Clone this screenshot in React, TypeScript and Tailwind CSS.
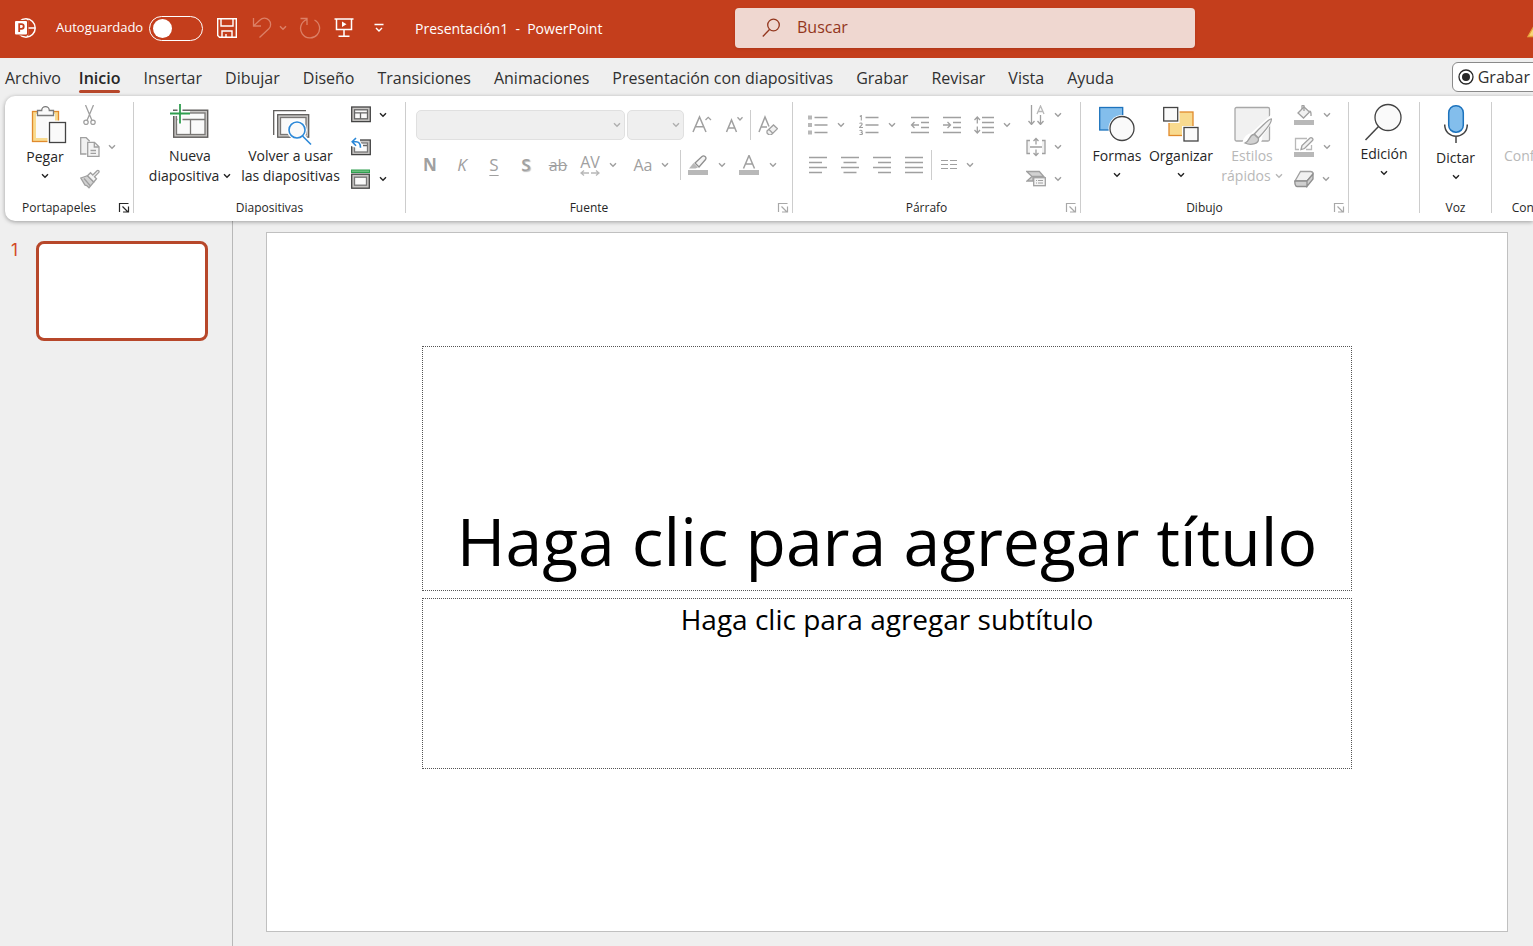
import React from 'react';

interface IconProps {
  width?: number;
  height?: number;
  className?: string;
  children: React.ReactNode;
}

function Icon({ width = 20, height = 20, className = '', children }: IconProps) {
  return (
    <svg
      width={width}
      height={height}
      viewBox={`0 0 ${width} ${height}`}
      fill="none"
      stroke="currentColor"
      strokeWidth="1.3"
      aria-hidden="true"
      className={`shrink-0 ${className}`}
    >
      {children}
    </svg>
  );
}

function Chevron({ className = '' }: { className?: string }) {
  return (
    <Icon width={8} height={6} className={className}>
      <path d="M1 1.2 4 4.3 7 1.2" strokeWidth="1.4" />
    </Icon>
  );
}

function MenuButton({ label, disabled = true, children }: { label: string; disabled?: boolean; children?: React.ReactNode }) {
  return (
    <button
      type="button"
      aria-label={label}
      disabled={disabled}
      className={`flex h-8 items-center gap-2 ${disabled ? 'text-[#a0a0a0]' : 'text-[#262626]'}`}
    >
      {children}
      <Chevron />
    </button>
  );
}

function ToolButton({ label, className = 'w-8', children }: { label: string; className?: string; children: React.ReactNode }) {
  return (
    <button type="button" aria-label={label} disabled className={`flex h-[30px] shrink-0 items-center justify-center text-[#a0a0a0] ${className}`}>
      {children}
    </button>
  );
}

function DropArrow({ label, className = 'w-[14px]' }: { label: string; className?: string }) {
  return (
    <ToolButton label={label} className={className}>
      <Chevron />
    </ToolButton>
  );
}

interface LargeButtonProps {
  icon: React.ReactNode;
  lines: string[];
  arrow?: 'inline' | 'below' | 'none';
  disabled?: boolean;
  className?: string;
  iconClassName?: string;
}

function LargeButton({ icon, lines, arrow = 'below', disabled = false, className = '', iconClassName = 'h-[47px]' }: LargeButtonProps) {
  return (
    <button
      type="button"
      disabled={disabled}
      className={`flex shrink-0 flex-col items-center text-[14px] leading-5 ${disabled ? 'text-[#b8b8b8]' : 'text-[#262626]'} ${className}`}
    >
      <span className={`shrink-0 ${iconClassName}`}>{icon}</span>
      {lines.map((line, i) => (
        <span key={line} className="flex items-center gap-1 whitespace-nowrap">
          {line}
          {arrow === 'inline' && i === lines.length - 1 && <Chevron />}
        </span>
      ))}
      {arrow === 'below' && <Chevron className="mt-[6px]" />}
    </button>
  );
}

interface GroupProps {
  label: string;
  launcher?: 'active' | 'disabled';
  className: string;
  children: React.ReactNode;
}

function Group({ label, launcher, className, children }: GroupProps) {
  return (
    <section aria-label={label || 'Edición'} className={`flex shrink-0 ${className}`}>
      <div className="flex min-w-0 flex-1 flex-col">
        <div className="flex h-24 items-start">{children}</div>
        <div className="flex h-[18px] items-end text-[12px] leading-[10px] text-[#262626]">
          <span className="flex-1 text-center">{label}</span>
          {launcher && (
            <button
              type="button"
              aria-label={`Opciones de ${label}`}
              className={`w-5 pl-[5px] ${launcher === 'active' ? 'text-[#262626]' : 'text-[#a8a8a8]'}`}
            >
              <Icon width={12} height={11}>
                <path d="M1.5 10V1.5H10.5M4.5 4.5 10 10M10.5 4.5V10H5" strokeWidth="1.2" />
              </Icon>
            </button>
          )}
        </div>
      </div>
      <div className="mt-[3px] w-px bg-[#cdcdcd]" />
    </section>
  );
}

const TABS = [
  'Archivo',
  'Inicio',
  'Insertar',
  'Dibujar',
  'Diseño',
  'Transiciones',
  'Animaciones',
  'Presentación con diapositivas',
  'Grabar',
  'Revisar',
  'Vista',
  'Ayuda',
];

function TitleBar() {
  return (
    <header className="flex h-[58px] items-center overflow-hidden bg-[#c43e1c] pb-[2px] text-white">
      <Icon width={22} height={22} className="ml-[14px]">
        <circle cx="12" cy="11" r="9.2" strokeWidth="1.5" />
        <path d="M13.5 2v18M13 11h8" strokeWidth="1.5" />
        <rect x="0" y="3" width="14.5" height="15.5" rx="1.5" fill="#c43e1c" stroke="none" />
        <rect x="1" y="4" width="12" height="13.5" rx="1" fill="white" stroke="none" />
        <path d="M5.2 15V7.2h2.2a2.3 2.3 0 0 1 0 4.7H5.2" stroke="#c43e1c" strokeWidth="1.8" />
      </Icon>
      <label htmlFor="autosave" className="ml-5 w-[93px] shrink-0 text-[13px]">Autoguardado</label>
      <input
        id="autosave"
        type="checkbox"
        role="switch"
        className="h-[25px] w-[54px] shrink-0 appearance-none rounded-full border border-white before:mt-[2px] before:ml-[3px] before:block before:size-[19px] before:rounded-full before:bg-white"
      />
      <button type="button" aria-label="Guardar" className="ml-[13px]">
        <Icon width={22} height={22}>
          <path d="M1.7 1.7h18.6v18.6H3.5L1.7 18.5zM5 2v7h12V2M6 20v-6h10v6M10 20v-3" strokeWidth="1.4" />
        </Icon>
      </button>
      <button type="button" aria-label="Deshacer" disabled className="ml-[14px] flex items-center gap-[7px] text-[#dc8067]">
        <Icon width={20} height={22}>
          <path d="M1.5 1v8H9M1.8 8.7 8 3a6.2 6.2 0 0 1 8.8 8.8L7.5 20.5" />
        </Icon>
        <Chevron />
      </button>
      <button type="button" aria-label="Rehacer" disabled className="ml-3 text-[#dc8067]">
        <Icon width={22} height={22}>
          <path d="M1.5 1.5H8V8M7.8 2.5A9.5 9.5 0 1 0 15.5 3" />
        </Icon>
      </button>
      <button type="button" aria-label="Presentación desde el principio" className="ml-[13px]">
        <Icon width={20} height={22}>
          <path d="M.5 2h19M2.5 2v10.5h15V2M10 12.5V19M4.500 19.300h11" strokeWidth="1.5" />
          <path d="M8 4.500v5.500l4.500-2.700z" fill="currentColor" stroke="none" />
        </Icon>
      </button>
      <button type="button" aria-label="Personalizar barra de acceso rápido" className="ml-5">
        <Icon width={10} height={10}>
          <path d="M.5 1.5h9M2 5l3 3 3-3" strokeWidth="1.4" />
        </Icon>
      </button>
      <h1 className="ml-[31px] w-[320px] shrink-0 text-[14px] whitespace-pre">{'Presentación1  -  PowerPoint'}</h1>
      <label className="flex h-10 w-[460px] shrink-0 items-center rounded bg-[#efd7d0] text-[#93361d] shadow-sm">
        <Icon width={18} height={20} className="ml-[27px]">
          <circle cx="11.5" cy="7" r="5.8" />
          <path d="M7.5 11.5.8 18.5" />
        </Icon>
        <input type="search" aria-label="Buscar" placeholder="Buscar" className="ml-[17px] flex-1 bg-transparent pb-[2px] text-[16px] outline-none placeholder:text-[#93361d]" />
      </label>
      <button type="button" aria-label="Advertencia" className="-mr-4 ml-auto shrink-0">
        <Icon width={22} height={20}>
          <path d="M11 1 21 18.5H1z" fill="#f8d777" stroke="#e8a33d" />
        </Icon>
      </button>
    </header>
  );
}

function TabBar() {
  return (
    <nav className="flex h-[38px] overflow-hidden pl-[5px] text-[16px] text-[#303030]">
      {TABS.map((tab) => (
        <button
          key={tab}
          type="button"
          className={`mr-[23px] flex shrink-0 flex-col whitespace-nowrap first:mr-[18px] ${tab === 'Inicio' ? 'font-semibold text-[#262626]' : ''}`}
        >
          <span className="mt-2 leading-6">{tab}</span>
          {tab === 'Inicio' && <span className="h-[3px] w-full rounded-full bg-[#b7472a]" />}
        </button>
      ))}
      <button type="button" className="-mr-[14px] ml-auto mt-1 flex h-[30px] shrink-0 items-center gap-1 rounded-md border border-[#8a8a8a] bg-white pr-4 pl-[5px]">
        <Icon width={16} height={16} className="text-[#262626]">
          <circle cx="8" cy="8" r="7" />
          <circle cx="8" cy="8" r="4" fill="currentColor" stroke="none" />
        </Icon>
        Grabar
      </button>
    </nav>
  );
}

function ClipboardGroup() {
  return (
    <Group label="Portapapeles" launcher="active" className="w-[129px]">
      <LargeButton
        className="ml-[5px] w-[70px]"
        iconClassName="h-12"
        lines={['Pegar']}
        icon={
          <Icon width={48} height={48}>
            <rect x="11.5" y="12.5" width="26" height="30" fill="#f8da8f" stroke="#e08a2c" />
            <rect x="15" y="15" width="19" height="24" fill="#fafafa" stroke="none" />
            <path d="M16.5 16.5v-5h4.200a3.800 3.800 0 0 1 7.600 0h4.200v5z" fill="#fafafa" stroke="#7a7a7a" />
            <rect x="26.5" y="21.5" width="20" height="24" fill="white" stroke="none" />
            <rect x="28.5" y="23.5" width="16" height="20" fill="#fafafa" stroke="#444" />
          </Icon>
        }
      />
      <div className="flex flex-col items-start text-[#a0a0a0]">
        <button type="button" aria-label="Cortar" disabled className="flex h-8 items-center">
          <Icon>
            <path d="m5.500 0 6.500 15.500M13.500 0 7 15.500" />
            <circle cx="6" cy="17.3" r="2.2" />
            <circle cx="13" cy="17.3" r="2.2" />
          </Icon>
        </button>
        <MenuButton label="Copiar">
          <Icon>
            <path d="M6.500 17H.7V.7h5.500l3.500 3.500" fill="#f1f1f1" />
            <path d="M7.700 5.300h6.800l4.500 4.500v9.500H7.700z" fill="#f4f4f4" />
            <path d="M14.300 5.500v4.500h4.500M10.500 13.500h5.500M10.500 16.300h5.500" />
          </Icon>
        </MenuButton>
        <button type="button" aria-label="Copiar formato" disabled className="flex h-8 items-center">
          <Icon>
            <path d="m.8 9 6.700-2.300 6.300 6.300L9 18.800 6.700 16.500 5 16.200z" fill="#d2d2d2" />
            <path d="m7.500 6.700 3-3 2.300 2.300 4.300-4.300c1-1 2.700.7 1.700 1.700l-4.300 4.300 2 2-2.700 3.300z" fill="#f4f4f4" />
            <path d="m4 9.500 6.500 7.500" />
          </Icon>
        </button>
      </div>
    </Group>
  );
}

function SlidesGroup() {
  return (
    <Group label="Diapositivas" className="w-[272px]">
      <LargeButton
        className="ml-[10px] w-[92px]"
        lines={['Nueva', 'diapositiva']}
        arrow="inline"
        icon={
          <Icon width={48} height={48}>
            <rect x="7.7" y="11.2" width="34" height="27" fill="#c8c6c4" stroke="#605e5c" strokeWidth="1.4" />
            <rect x="10.5" y="14" width="28.5" height="21.5" fill="#fafafa" stroke="#797775" />
            <path d="M10.5 20.5H39M24.5 20.5v15" stroke="#797775" />
            <path d="M4 14.5h20M14 5v19.5" stroke="white" strokeWidth="5" />
            <path d="M4 14.5h20M14 5v19.5" stroke="#2f9e4f" strokeWidth="1.8" />
          </Icon>
        }
      />
      <LargeButton
        className="w-[109px]"
        lines={['Volver a usar', 'las diapositivas']}
        arrow="none"
        icon={
          <Icon width={48} height={48}>
            <path d="M6.7 36V11.7H39" stroke="#605e5c" />
            <rect x="10.7" y="15.7" width="31" height="22.5" fill="#c8c6c4" stroke="#605e5c" />
            <rect x="13.5" y="18.5" width="25.5" height="17" fill="#fafafa" stroke="#797775" />
            <circle cx="30" cy="31" r="8" fill="#fafafa" stroke="white" strokeWidth="4" />
            <path d="m35 36 9 9.5" stroke="white" strokeWidth="4" />
            <circle cx="30" cy="31" r="8" fill="#fafafa" stroke="#2b88d8" strokeWidth="1.6" />
            <path d="m35.5 37 8.5 8.5" stroke="#2b88d8" strokeWidth="1.6" />
          </Icon>
        }
      />
      <div className="flex flex-col items-start pl-[6px]">
        <MenuButton label="Diseño" disabled={false}>
          <Icon>
            <rect x=".7" y="2" width="18.6" height="14.6" fill="#c8c6c4" stroke="#444" />
            <rect x="3.5" y="4.8" width="13" height="9" fill="#fafafa" stroke="#666" />
            <path d="M3.5 7.8h13M9.500 7.800v6" stroke="#666" />
          </Icon>
        </MenuButton>
        <button type="button" aria-label="Restablecer" className="flex h-8 items-center">
          <Icon>
            <rect x=".7" y="3" width="18.6" height="14.6" fill="#c8c6c4" stroke="#444" />
            <rect x="3.5" y="6" width="13" height="9" fill="#fafafa" stroke="#777" />
            <path d="M12 8.5h4" stroke="#666" />
            <path d="M0 0h9v4l3 5v3H8L0 9z" fill="white" stroke="none" />
            <path d="M5 1 1.2 4.8 5 8.700M1.500 4.800H5c3 0 4.500 2 4.500 6" stroke="#2b88d8" strokeWidth="1.6" />
          </Icon>
        </button>
        <MenuButton label="Sección" disabled={false}>
          <Icon>
            <rect x=".5" y="1" width="18" height="2.5" fill="#6cc07f" stroke="#2f9e4f" strokeWidth="1" />
            <rect x=".7" y="5.2" width="17.6" height="14" fill="#c8c6c4" stroke="#444" />
            <rect x="3.5" y="8.2" width="12" height="8" fill="#fafafa" stroke="#777" />
          </Icon>
        </MenuButton>
      </div>
    </Group>
  );
}

function FontGroup() {
  return (
    <Group label="Fuente" launcher="disabled" className="w-[387px]">
      <div className="flex flex-col gap-[10px] pt-[11px]">
        <div className="flex pl-[10px]">
          <div className="relative">
            <select aria-label="Fuente" disabled className="h-[30px] w-[209px] appearance-none rounded-[5px] border border-[#e0e0e0] bg-[#efefef]" />
            <Chevron className="absolute top-3 right-1 text-[#b0b0b0]" />
          </div>
          <div className="relative ml-[2px]">
            <select aria-label="Tamaño de fuente" disabled className="h-[30px] w-[57px] appearance-none rounded-[5px] border border-[#e0e0e0] bg-[#efefef]" />
            <Chevron className="absolute top-3 right-1 text-[#b0b0b0]" />
          </div>
          <ToolButton label="Aumentar tamaño de fuente" className="ml-[2px] w-8">
            <Icon>
              <path d="m1 17 6.500-15L14 17M3.500 11.700h8" strokeWidth="1.5" />
              <path d="m13.500 5 2.700-2.700L19 5" />
            </Icon>
          </ToolButton>
          <ToolButton label="Disminuir tamaño de fuente" className="w-8">
            <Icon>
              <path d="m2.500 17 5-12 5 12M4.300 13h6.500" strokeWidth="1.5" />
              <path d="m13.500 2.300 2.500 2.700 2.500-2.700" />
            </Icon>
          </ToolButton>
          <div className="w-px bg-[#cdcdcd]" />
          <ToolButton label="Borrar formato" className="w-[34px]">
            <Icon>
              <path d="M1 17 7 2l4 9.500M3 12h6" strokeWidth="1.5" />
              <path d="m9 16 6.500-6 4 3.700-6.500 6.300H11L9 18z" fill="#f1f1f1" />
              <path d="m11 14.500 4 4" />
            </Icon>
          </ToolButton>
        </div>
        <div className="flex pl-2">
          <ToolButton label="Negrita"><span className="text-[17px] leading-7 font-bold">N</span></ToolButton>
          <ToolButton label="Cursiva"><span className="text-[17px] italic">K</span></ToolButton>
          <ToolButton label="Subrayado"><span className="text-[17px] underline underline-offset-4">S</span></ToolButton>
          <ToolButton label="Sombra de texto"><span className="text-[17px] font-semibold text-shadow-[1px_1px_1px_#bbb]">S</span></ToolButton>
          <ToolButton label="Tachado"><span className="px-[1px] text-[16px] line-through">ab</span></ToolButton>
          <ToolButton label="Espaciado entre caracteres">
            <span className="flex flex-col items-center text-[16px] leading-4">
              AV
              <Icon width={20} height={6}>
                <path d="M9 3H1M4 .5 1 3l3 2.500M11 3h8M16 .5 19 3l-3 2.500" stroke="#b8b8b8" />
              </Icon>
            </span>
          </ToolButton>
          <DropArrow label="Opciones de espaciado" />
          <ToolButton label="Cambiar mayúsculas y minúsculas" className="ml-2 w-[30px]"><span className="text-[16px]">Aa</span></ToolButton>
          <DropArrow label="Opciones de mayúsculas" />
          <div className="ml-2 w-px bg-[#cdcdcd]" />
          <ToolButton label="Color de resaltado" className="w-[34px]">
            <Icon>
              <path d="M1 13.500 5.500 8l4.500 4.500-2.500 1z" fill="#b8b8b8" stroke="none" />
              <path d="m7 8 7-6.500c2-1.700 5 1 3.500 3L11 12z" fill="#f4f4f4" stroke="#8f8f8f" />
              <path d="M0 17.500h20" stroke="#b8b8b8" strokeWidth="5" />
            </Icon>
          </ToolButton>
          <DropArrow label="Colores de resaltado" />
          <ToolButton label="Color de fuente" className="ml-[3px] w-[34px]">
            <Icon>
              <path d="m4.500 13.500 5.500-13 5.500 13M6.500 9h7" strokeWidth="1.5" />
              <path d="M0 17.500h20" stroke="#b8b8b8" strokeWidth="5" />
            </Icon>
          </ToolButton>
          <DropArrow label="Colores de fuente" />
        </div>
      </div>
    </Group>
  );
}

function ParagraphGroup() {
  return (
    <Group label="Párrafo" launcher="disabled" className="w-[288px]">
      <div className="flex w-[233px] shrink-0 flex-col gap-[10px] pt-[11px]">
        <div className="flex pl-[10px]">
          <ToolButton label="Viñetas" className="w-[30px]">
            <Icon>
              <path d="M0 2.500h4M0 10h4M0 17.500h4" stroke="#b8b8b8" strokeWidth="4" />
              <path d="M6.500 2.500h13M6.500 10h13M6.500 17.500h13" />
            </Icon>
          </ToolButton>
          <DropArrow label="Biblioteca de viñetas" className="w-4" />
          <ToolButton label="Numeración" className="ml-[5px] w-[30px]">
            <Icon>
              <path d="M.8 1.500 2.300.5v5M.5 8.500c1-1 3-.5 2.500 1S.5 12 .5 12.500H4M.5 15.500c3-1 3.500 2 1.200 2 2.800 0 2.300 2.700-1.200 2" strokeWidth="1.1" />
              <path d="M6.500 2.500h13M6.500 10h13M6.500 17.500h13" />
            </Icon>
          </ToolButton>
          <DropArrow label="Biblioteca de numeración" className="w-4" />
          <ToolButton label="Reducir nivel de lista" className="ml-1 w-8">
            <Icon>
              <path d="M1 2.500h18M11 7.500h8M11 12.500h8M1 17.500h18M9 10H2M4.500 7 1.500 10l3 3" />
            </Icon>
          </ToolButton>
          <ToolButton label="Aumentar nivel de lista">
            <Icon>
              <path d="M1 2.500h18M11 7.500h8M11 12.500h8M1 17.500h18M1 10h7M5.500 7l3 3-3 3" />
            </Icon>
          </ToolButton>
          <ToolButton label="Interlineado">
            <Icon>
              <path d="M8 2.500h12M8 7.500h12M8 12.500h12M8 17.500h12M3.300 2.500v6M.5 5l2.800-3L6 5M3.300 11.500v6M.5 15l2.800 3L6 15" />
            </Icon>
          </ToolButton>
          <DropArrow label="Opciones de interlineado" />
        </div>
        <div className="flex pl-[9px]">
          <ToolButton label="Alinear a la izquierda">
            <Icon>
              <path d="M1 2.500h18M1 7.500h13M1 12.500h18M1 17.500h13" />
            </Icon>
          </ToolButton>
          <ToolButton label="Centrar">
            <Icon>
              <path d="M1 2.500h18M3.500 7.500h13M1 12.500h18M3.500 17.500h13" />
            </Icon>
          </ToolButton>
          <ToolButton label="Alinear a la derecha">
            <Icon>
              <path d="M1 2.500h18M6 7.500h13M1 12.500h18M6 17.500h13" />
            </Icon>
          </ToolButton>
          <ToolButton label="Justificar">
            <Icon>
              <path d="M1 2.500h18M1 7.500h18M1 12.500h18M1 17.500h18" />
            </Icon>
          </ToolButton>
          <div className="ml-px w-px bg-[#cdcdcd]" />
          <ToolButton label="Columnas" className="w-[34px]">
            <Icon width={16} height={12}>
              <path d="M0 1.500h7M0 5.500h7M0 9.500h7M9 1.500h7M9 5.500h7M9 9.500h7" strokeWidth="1.2" />
            </Icon>
          </ToolButton>
          <DropArrow label="Opciones de columnas" className="w-2" />
        </div>
      </div>
      <div className="flex flex-col items-start">
        <MenuButton label="Dirección del texto">
          <Icon>
            <path d="M5.500 0v19M2.500 16l3 3.500 3-3.500M14.500 10v9M11.500 16l3 3.500 3-3.500" />
            <path d="m11 9 3.500-8L18 9M12 6.500h5" stroke="#b8b8b8" />
          </Icon>
        </MenuButton>
        <MenuButton label="Alinear texto">
          <Icon>
            <path d="M4 3.500H1v13h3M16 3.500h3v13h-3" fill="#f1f1f1" />
            <path d="M4 10h12M10 1.500v6M7.500 4 10 1.500 12.500 4M10 12.500v6M7.500 16l2.500 2.500 2.500-2.500" />
          </Icon>
        </MenuButton>
        <MenuButton label="Convertir a SmartArt">
          <Icon>
            <path d="M.8 2.500h12.500l4.500 5H7v4.500H1l5-4.500z" fill="#d2d2d2" />
            <rect x="7.7" y="8.7" width="11.6" height="8" fill="#f4f4f4" />
            <path d="M10 11.500h1M12 11.500h5M10 14h1M12 14h5" strokeWidth="1.1" />
          </Icon>
        </MenuButton>
      </div>
    </Group>
  );
}

function DrawingGroup() {
  return (
    <Group label="Dibujo" launcher="disabled" className="w-[268px]">
      <LargeButton
        className="ml-[6px] w-[60px]"
        lines={['Formas']}
        icon={
          <Icon width={48} height={48}>
            <rect x="6.7" y="8.5" width="23" height="22.5" fill="#83beec" stroke="#1d73bd" />
            <circle cx="29" cy="29.5" r="13.5" fill="white" stroke="none" />
            <circle cx="29" cy="29.5" r="12" fill="#fafafa" stroke="#444" />
          </Icon>
        }
      />
      <LargeButton
        className="w-[68px]"
        lines={['Organizar']}
        icon={
          <Icon width={48} height={48}>
            <rect x="12" y="13" width="24" height="23.5" fill="#f8da8f" stroke="#e08a2c" />
            <path d="M5 6.500h17.500V24H5zM25 27h18v17H25z" fill="white" stroke="none" />
            <rect x="6.7" y="8.5" width="14" height="13.5" fill="#fafafa" stroke="#444" />
            <rect x="27" y="28.5" width="14" height="13.5" fill="#fafafa" stroke="#444" />
          </Icon>
        }
      />
      <LargeButton
        className="ml-[2px] w-[70px]"
        lines={['Estilos', 'rápidos']}
        arrow="inline"
        disabled
        icon={
          <Icon width={48} height={48}>
            <rect x="7" y="8.5" width="34.5" height="33.5" rx="1.5" fill="#f1f1f1" stroke="#a8a8a8" />
            <path d="M43.500 18 24 36c-3 0-7 3-8 9h11c4-1 6-4 5-8l12-16z" fill="white" stroke="white" strokeWidth="4" />
            <path d="M43.300 20c-2-.5-14 11.500-17 15l4 4c3-3 14-15 13-19z" fill="#f1f1f1" stroke="#a0a0a0" />
            <path d="M26.300 35.500c-5-.5-4 6.500-9.300 8.500 5 2.500 14 1.500 13.500-4.500z" fill="#d2d2d2" stroke="#a0a0a0" />
          </Icon>
        }
      />
      <div className="flex flex-col items-start pl-[7px]">
        <MenuButton label="Relleno de forma">
          <Icon className="mr-[1px]">
            <path d="m4 8 6-6 5.500 5-6 6z" fill="#f1f1f1" />
            <path d="M8 4V1c0-1 2-1 2 0v5M15.500 6c2 .5 1.500 3 1.500 5" />
            <path d="M0 17.500h20" stroke="#b8b8b8" strokeWidth="5" />
          </Icon>
        </MenuButton>
        <MenuButton label="Contorno de forma">
          <Icon className="mr-[1px]">
            <path d="M13 1.500H1.500v11H5M17.500 8v4.500H12" stroke="#b8b8b8" />
            <path d="m7 12.500 1-4L16 1c1.500-1 4 1 2.500 2.500L10.500 11.500z" fill="#f1f1f1" />
            <path d="M0 17.500h20" stroke="#b8b8b8" strokeWidth="5" />
          </Icon>
        </MenuButton>
        <MenuButton label="Efectos de forma">
          <Icon>
            <path d="M6.500 2.500h10c1.500 0 2.500 1 2.500 2.500L13 12H1z" fill="#f1f1f1" />
            <path d="M1 12h12v5.500H3c-1.500 0-2.500-3-2-5.500zM13 12l6-7v5l-6 7.500z" fill="#cfcfcf" stroke="#8f8f8f" />
          </Icon>
        </MenuButton>
      </div>
    </Group>
  );
}

function Ribbon() {
  return (
    <div className="relative z-10 ml-[5px] flex h-[125px] overflow-hidden rounded-l-[10px] bg-white pt-[3px] pb-2 shadow-[0_1px_4px_rgba(0,0,0,0.35)]">
      <ClipboardGroup />
      <SlidesGroup />
      <FontGroup />
      <ParagraphGroup />
      <DrawingGroup />
      <Group label="" className="w-[71px]">
        <LargeButton
          className="w-[70px]"
          iconClassName="h-[45px]"
          lines={['Edición']}
          icon={
            <Icon width={48} height={46}>
              <circle cx="28" cy="18.5" r="13" fill="#fafafa" stroke="#444" />
              <path d="M18.500 27.500 5.500 41" stroke="#444" strokeWidth="1.5" />
            </Icon>
          }
        />
      </Group>
      <Group label="Voz" className="w-[72px]">
        <LargeButton
          className="w-[71px]"
          iconClassName="h-[49px]"
          lines={['Dictar']}
          icon={
            <Icon width={48} height={48}>
              <rect x="16.7" y="6.7" width="14.6" height="26.5" rx="7" fill="#83beec" stroke="#1d73bd" strokeWidth="1.5" />
              <path d="M12.700 25.500c0 15.500 22.600 15.500 22.600 0M24 37.500V44" stroke="#444" strokeWidth="1.5" />
            </Icon>
          }
        />
      </Group>
      <Group label="Confidencialidad" className="w-[134px]">
        <LargeButton className="w-[133px]" lines={['Confidencialidad']} icon={null} disabled />
      </Group>
    </div>
  );
}

export default function App() {
  return (
    <div className="flex min-h-screen flex-col overflow-hidden bg-[#efefef] font-['Open_Sans','Noto_Sans',sans-serif]">
      <TitleBar />
      <TabBar />
      <Ribbon />
      <div className="flex flex-1">
        <aside className="flex w-[233px] shrink-0 items-start border-r border-[#b8b8b8] pt-5 pl-[11px]">
          <span className="w-[25px] font-['Inter',sans-serif] text-[17px] leading-[18px] text-[#d24726]">1</span>
          <button type="button" aria-label="Diapositiva 1" className="h-[100px] w-[172px] rounded-lg border-[3px] border-[#b7472a] bg-white" />
        </aside>
        <main className="flex flex-1 pt-[11px] pr-[25px] pb-[14px] pl-[33px]">
          <div className="flex-1 border border-[#c0c0c0] bg-white pt-[113px] text-center text-black">
            <div className="mx-auto flex h-[245px] w-3/4 items-end justify-center border border-dotted border-[#555]">
              <h2 className="text-[66px] leading-[100px] whitespace-nowrap">Haga clic para agregar título</h2>
            </div>
            <div className="mx-auto mt-[7px] h-[171px] w-3/4 border border-dotted border-[#555]">
              <p className="text-[28px] leading-10">Haga clic para agregar subtítulo</p>
            </div>
          </div>
        </main>
      </div>
    </div>
  );
}
